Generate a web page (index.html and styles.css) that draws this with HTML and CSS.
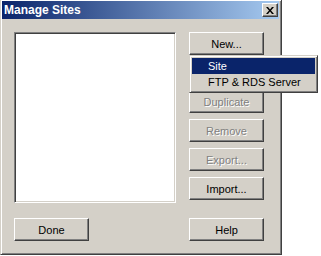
FILE: index.html
```html
<!DOCTYPE html>
<html lang="en">
<head>
  <meta charset="UTF-8">
  <title>Manage Sites</title>
  <link rel="stylesheet" href="styles.css">
</head>
<body>
  <div class="window">
    <div class="titlebar">
      <span class="title">Manage Sites</span>
      <button class="close">
        <svg width="8" height="7" viewBox="0 0 8 7"><path d="M0 0h2l2 2.5L6 0h2L5 3.5 8 7H6L4 4.5 2 7H0l3-3.5z" fill="#000"/></svg>
      </button>
    </div>
    <div class="content">
      <div class="main">
        <div class="listbox"></div>
        <div class="buttons">
          <button class="btn">New...</button>
          <!-- covered by the popup menu -->
          <button class="btn" disabled></button>
          <button class="btn" disabled>Duplicate</button>
          <button class="btn" disabled>Remove</button>
          <button class="btn" disabled>Export...</button>
          <button class="btn">Import...</button>
        </div>
      </div>
      <div class="footer">
        <button class="btn">Done</button>
        <button class="btn">Help</button>
      </div>
    </div>
  </div>

  <div class="menu">
    <div class="menu-item active">Site</div>
    <div class="menu-item">FTP &amp; RDS Server</div>
  </div>
</body>
</html>
```

FILE: styles.css
```css
body {
  margin: 0;
  width: 321px;
  height: 256px;
  background: #fff;
  font-family: "Liberation Sans", Arial, sans-serif;
  font-size: 11px;
  position: relative;
  overflow: hidden;
}
.window {
  width: 282px;
  height: 255px;
  box-sizing: border-box;
  background: #d4d0c8;
  border: 1px solid;
  border-top: 0;
  border-color: #d4d0c8 #404040 #404040 #d4d0c8;
  box-shadow: inset 1px 1px #fff, inset -1px -1px #808080;
  padding: 1px 2px 2px 1px;
}
.titlebar {
  height: 18px;
  background: linear-gradient(to right, #0a246a, #a6caf0);
  display: flex;
  align-items: center;
  justify-content: space-between;
}
.title {
  color: #fff;
  font-weight: bold;
  font-size: 12px;
  padding-left: 2px;
}
.close {
  width: 16px;
  height: 14px;
  margin-right: 1px;
  padding: 0;
  box-sizing: border-box;
  background: #d4d0c8;
  border: 1px solid;
  border-color: #fff #404040 #404040 #fff;
  box-shadow: inset -1px -1px #808080;
  display: flex;
  align-items: center;
  justify-content: center;
}
.content {
  padding: 13px 0 0 12px;
}
.main {
  display: flex;
  gap: 13px;
}
.listbox {
  width: 162px;
  height: 171px;
  box-sizing: border-box;
  background: #fff;
  border: 1px solid;
  border-color: #808080 #fff #fff #808080;
  box-shadow: inset 1px 1px #404040, inset -1px -1px #d4d0c8;
}
.buttons {
  display: flex;
  flex-direction: column;
  gap: 6px;
}
.btn {
  width: 75px;
  height: 23px;
  box-sizing: border-box;
  padding: 0;
  background: #d4d0c8;
  border: 1px solid;
  border-color: #fff #404040 #404040 #fff;
  box-shadow: inset -1px -1px #808080;
  font-family: inherit;
  font-size: 11px;
  color: #000;
}
.btn:disabled {
  color: #808080;
  text-shadow: 1px 1px #fff;
}
.footer {
  display: flex;
  gap: 100px;
  margin-top: 15px;
}
.menu {
  position: absolute;
  left: 189px;
  top: 55px;
  width: 129px;
  height: 38px;
  box-sizing: border-box;
  background: #d4d0c8;
  border: 1px solid;
  border-color: #d4d0c8 #404040 #404040 #d4d0c8;
  box-shadow: inset 1px 1px #fff, inset -1px -1px #808080;
  padding: 2px;
}
.menu-item {
  height: 16px;
  line-height: 16px;
  padding-left: 16px;
  color: #000;
}
.menu-item.active {
  background: #0a246a;
  color: #fff;
}
```
